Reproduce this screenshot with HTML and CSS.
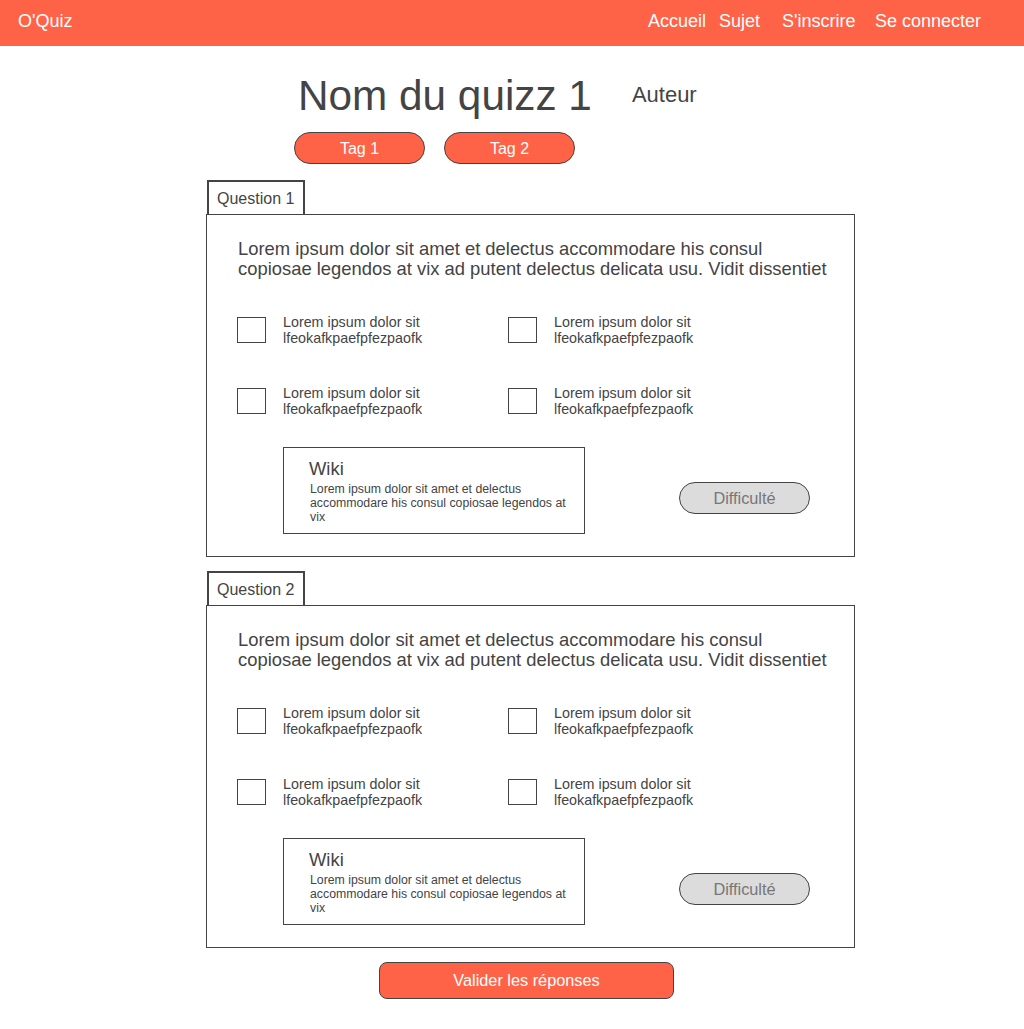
FILE: index.html
```html
<!DOCTYPE html>
<html lang="fr">
<head>
<meta charset="utf-8">
<title>O'Quiz</title>
<link rel="stylesheet" href="styles.css">
</head>
<body>
<header class="topbar">
  <div class="logo">O'Quiz</div>
  <nav class="nav">
    <a class="nav-link">Accueil</a>
    <a class="nav-link">Sujet</a>
    <a class="nav-link">S'inscrire</a>
    <a class="nav-link">Se connecter</a>
  </nav>
</header>

<main class="main">
  <div class="title-row">
    <h1 class="title">Nom du quizz 1</h1>
    <div class="author">Auteur</div>
  </div>
  <div class="tags">
    <span class="tag">Tag 1</span>
    <span class="tag">Tag 2</span>
  </div>

  <section class="question">
    <div class="tab">Question 1</div>
    <div class="qbox">
      <p class="qtext">Lorem ipsum dolor sit amet et delectus accommodare his consul copiosae legendos at vix ad putent delectus delicata usu. Vidit dissentiet</p>
      <div class="answers">
        <label class="answer"><span class="check"></span><span class="atext">Lorem ipsum dolor sit<br>lfeokafkpaefpfezpaofk</span></label>
        <label class="answer"><span class="check"></span><span class="atext">Lorem ipsum dolor sit<br>lfeokafkpaefpfezpaofk</span></label>
        <label class="answer"><span class="check"></span><span class="atext">Lorem ipsum dolor sit<br>lfeokafkpaefpfezpaofk</span></label>
        <label class="answer"><span class="check"></span><span class="atext">Lorem ipsum dolor sit<br>lfeokafkpaefpfezpaofk</span></label>
      </div>
      <div class="bottom-row">
        <div class="wiki">
          <div class="wiki-title">Wiki</div>
          <div class="wiki-text">Lorem ipsum dolor sit amet et delectus accommodare his consul copiosae legendos at vix</div>
        </div>
        <span class="difficulty">Difficulté</span>
      </div>
    </div>
  </section>

  <section class="question">
    <div class="tab">Question 2</div>
    <div class="qbox">
      <p class="qtext">Lorem ipsum dolor sit amet et delectus accommodare his consul copiosae legendos at vix ad putent delectus delicata usu. Vidit dissentiet</p>
      <div class="answers">
        <label class="answer"><span class="check"></span><span class="atext">Lorem ipsum dolor sit<br>lfeokafkpaefpfezpaofk</span></label>
        <label class="answer"><span class="check"></span><span class="atext">Lorem ipsum dolor sit<br>lfeokafkpaefpfezpaofk</span></label>
        <label class="answer"><span class="check"></span><span class="atext">Lorem ipsum dolor sit<br>lfeokafkpaefpfezpaofk</span></label>
        <label class="answer"><span class="check"></span><span class="atext">Lorem ipsum dolor sit<br>lfeokafkpaefpfezpaofk</span></label>
      </div>
      <div class="bottom-row">
        <div class="wiki">
          <div class="wiki-title">Wiki</div>
          <div class="wiki-text">Lorem ipsum dolor sit amet et delectus accommodare his consul copiosae legendos at vix</div>
        </div>
        <span class="difficulty">Difficulté</span>
      </div>
    </div>
  </section>

  <button class="submit">Valider les réponses</button>
</main>
</body>
</html>
```

FILE: styles.css
```css
* { box-sizing: border-box; }

body {
  margin: 0;
  font-family: "Liberation Sans", Arial, sans-serif;
  color: #444;
  background: #fff;
}

.topbar {
  display: flex;
  align-items: flex-start;
  height: 46px;
  padding: 11px 38px 0 18px;
  background: #ff6347;
  color: #fff;
  font-size: 18px;
}

.logo { flex: 1; }

.nav {
  display: grid;
  grid-template-columns: 71px 63px 93px 111px;
}

.nav-link { color: #fff; white-space: nowrap; }

.main {
  width: 649px;
  margin-left: 206px;
  padding-bottom: 30px;
}

.title-row {
  display: flex;
  align-items: flex-start;
  margin-top: 26px;
  padding-left: 92px;
}

.title {
  margin: 0;
  font-size: 42.3px;
  font-weight: normal;
  line-height: 48px;
}

.author {
  margin: 10px 0 0 40px;
  font-size: 22px;
}

.tags {
  display: flex;
  gap: 19px;
  margin-top: 12px;
  padding-left: 88px;
}

.tag {
  width: 131px;
  height: 32px;
  border: 1px solid #444;
  border-radius: 16px;
  background: #ff6347;
  color: #fff;
  font-size: 16px;
  display: flex;
  align-items: center;
  justify-content: center;
  padding-top: 1px;
}

.question { margin-top: 16px; }
.question + .question { margin-top: 14px; }

.tab {
  width: 98px;
  height: 34px;
  margin-left: 1px;
  padding: 8px 0 0 8px;
  border: 2px solid #444;
  border-bottom: none;
  font-size: 16px;
}

.qbox {
  border: 1px solid #444;
  padding: 24px 0 22px 0;
}

.qtext {
  margin: 0;
  padding-left: 31px;
  padding-right: 20px;
  font-size: 18.4px;
  line-height: 20px;
}

.answers {
  display: grid;
  grid-template-columns: 271px 271px;
  grid-auto-rows: 32px;
  row-gap: 39px;
  margin-top: 35px;
  padding-left: 30px;
}

.answer {
  display: flex;
  align-items: center;
}

.check {
  width: 29px;
  height: 26px;
  border: 1px solid #444;
  flex: none;
}

.atext {
  margin-left: 17px;
  font-size: 14.3px;
  line-height: 16px;
  margin-top: -1px;
}

.bottom-row {
  display: flex;
  align-items: flex-start;
  margin-top: 30px;
}

.wiki {
  width: 302px;
  height: 87px;
  margin-left: 76px;
  border: 1px solid #444;
  padding: 11px 12px 0 25px;
}

.wiki-title {
  font-size: 18.4px;
  line-height: 20px;
}

.wiki-text {
  margin: 3px 0 0 1px;
  font-size: 12.3px;
  line-height: 14px;
}

.difficulty {
  width: 131px;
  height: 32px;
  margin: 35px 44px 0 auto;
  border: 1px solid #444;
  border-radius: 16px;
  background: #dcdcdc;
  color: #777;
  font-size: 16.3px;
  display: flex;
  align-items: center;
  justify-content: center;
}

.submit {
  display: flex;
  align-items: center;
  justify-content: center;
  width: 295px;
  height: 37px;
  margin: 14px 0 0 173px;
  border: 1px solid #444;
  border-radius: 8px;
  background: #ff6347;
  color: #fff;
  font-family: "Liberation Sans", Arial, sans-serif;
  font-size: 16.3px;
}
```
